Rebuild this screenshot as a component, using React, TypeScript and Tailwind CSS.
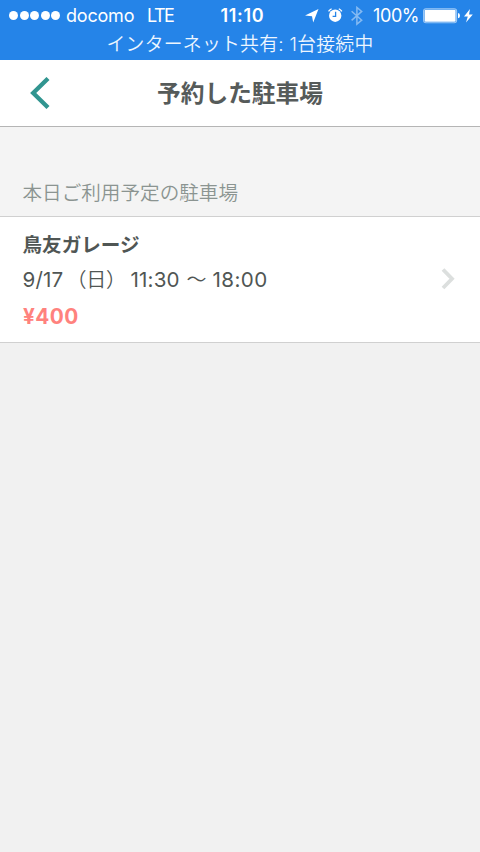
const dots = [0, 1, 2, 3, 4];

function StatusBar() {
  return (
    <div className="h-[60px] bg-[#2584e8] text-white">
      <div className="flex h-8 items-center whitespace-nowrap pl-[9px] text-[18px] leading-8">
        <div className="-mt-px flex w-[57px] shrink-0 gap-[1.6px]">
          {dots.map((d) => (
            <span key={d} className="size-[9px] shrink-0 rounded-full bg-white" />
          ))}
        </div>
        <span className="w-[81px] shrink-0 tracking-[-0.2px]">docomo</span>
        <span className="w-[73.5px] shrink-0 tracking-[-1.5px]">LTE</span>
        <span className="w-[84px] shrink-0 font-semibold tracking-[0.7px]">11:10</span>
        <svg className="w-[23px] shrink-0" height="20" viewBox="0 0 23 20">
          <path d="M13.5 3 8.2 16.5 7 10.3 0 9.6Z" fill="white" />
        </svg>
        <svg className="w-[23px] shrink-0" height="20" viewBox="0 0 23 20">
          <circle cx="7.2" cy="9.7" r="6.2" fill="white" />
          <path d="M0.5 5.4A9 9 0 0 1 3.6 2.7M13.9 5.4A9 9 0 0 0 10.8 2.7" fill="none" stroke="white" strokeWidth="1.3" />
          <path d="M7.6 5.8V10.3H4.6" fill="none" stroke="#2584e8" strokeWidth="1.3" />
        </svg>
        <svg className="w-[22.5px] shrink-0" height="20" viewBox="0 0 22.5 20">
          <path d="M0.6 5.2 10.7 14.2 5.9 18.2V1.4L10.7 5.4 0.6 14.4" fill="none" stroke="#85baf2" strokeWidth="1.5" />
        </svg>
        <span className="w-[50px] shrink-0 tracking-[-0.4px]">100%</span>
        <svg className="shrink-0" width="52" height="20" viewBox="0 0 52 20">
          <rect x="0.6" y="2.7" width="33" height="14" rx="2.4" fill="#2584e8" stroke="#9dc9f6" strokeWidth="1.1" />
          <rect x="1.6" y="3.7" width="31" height="12" rx="1.2" fill="white" />
          <path d="M35 7.1Q37 7.4 37 9.7T35 12.3Z" fill="white" />
          <path d="M47 3 41 10.6H44.8L43 16.5 49.8 8.6H46Z" fill="white" />
        </svg>
      </div>
      <div className="h-7 whitespace-nowrap text-center text-[18.8px] leading-[25px] font-[350] tracking-[0.3px] text-[#edf6ff]">
        インターネット共有: 1台接続中
      </div>
    </div>
  );
}

function Header() {
  return (
    <header className="flex h-[67px] items-center border-b border-[#b5b5b5] bg-white">
      <button className="flex w-20 justify-start pl-[30px]" aria-label="戻る">
        <svg width="20" height="32" viewBox="0 0 20 32">
          <path d="M18 1.5 3.2 16 18 30.5" fill="none" stroke="#319590" strokeWidth="4.3" />
        </svg>
      </button>
      <h1 className="flex-1 pt-0.5 text-center text-[23.7px] font-bold text-[#565b5a]">予約した駐車場</h1>
      <span className="w-20" />
    </header>
  );
}

export default function App() {
  return (
    <main className="h-[852px] w-[480px] overflow-hidden bg-[#f1f1f1] font-['Inter','Noto_Sans_CJK_JP',sans-serif]">
      <StatusBar />
      <Header />
      <h2 className="h-[89px] bg-[#f4f4f4] pl-[22.5px] pt-[51px] text-[19.6px] leading-[30px] font-[350] text-[#8b9491]">
        本日ご利用予定の駐車場
      </h2>
      <section className="flex h-[127px] items-center justify-between border-y border-[#d0d0d0] bg-white pr-[25px] pl-[22.5px] text-[#505654]">
        <div className="whitespace-nowrap pt-[5px] text-[19.6px]">
          <p className="h-[35px] font-bold leading-[30px]">鳥友ガレージ</p>
          <p className="flex h-[37px] text-[20.6px] leading-[30px] tracking-[0.15px]">
            <span className="w-[44px]">9/17</span>
            <span className="w-[64px] text-[20px] font-[350] tracking-[-0.2px]">（日）</span>
            <span className="w-[56px]">11:30</span>
            <span className="w-[26px] text-[20px] font-[350]">〜</span>
            <span className="tracking-[0.4px]">18:00</span>
          </p>
          <p className="h-[32px] pl-[0.5px] text-[20.8px] font-bold leading-[30px] tracking-[0.4px] text-[#ff827d]">¥400</p>
        </div>
        <svg className="-mt-px" width="14" height="24" viewBox="0 0 14 24">
          <path d="M2 2.5 11 11.8 2 21" fill="none" stroke="#dcdfde" strokeWidth="3.8" />
        </svg>
      </section>
    </main>
  );
}
